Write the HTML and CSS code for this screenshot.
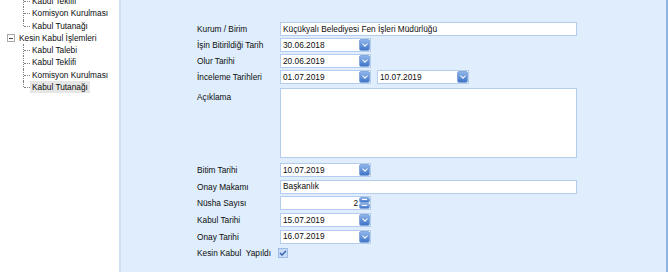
FILE: index.html
```html
<!DOCTYPE html>
<html lang="tr">
<head>
    <meta charset="UTF-8">
    <title>Kesin Kabul</title>
    <link rel="stylesheet" href="styles.css">
</head>
<body>
    <div class="window">
        <div class="tree">
            <ul class="group first">
                <li>Kabul Teklifi</li>
                <li>Komisyon Kurulması</li>
                <li>Kabul Tutanağı</li>
            </ul>
            <div class="node"><span class="toggle"></span>Kesin Kabul İşlemleri</div>
            <ul class="group">
                <li>Kabul Talebi</li>
                <li>Kabul Teklifi</li>
                <li>Komisyon Kurulması</li>
                <li><span class="selected">Kabul Tutanağı</span></li>
            </ul>
        </div>

        <div class="main">
            <div class="form">
                <div class="row">
                    <label>Kurum / Birim</label>
                    <div class="field wide">Küçükyalı Belediyesi Fen İşleri Müdürlüğü</div>
                </div>
                <div class="row">
                    <label>İşin Bitirildiği Tarih</label>
                    <div class="field date">30.06.2018<span class="drop"></span></div>
                </div>
                <div class="row">
                    <label>Olur Tarihi</label>
                    <div class="field date">20.06.2019<span class="drop"></span></div>
                </div>
                <div class="row">
                    <label>İnceleme Tarihleri</label>
                    <div class="field date">01.07.2019<span class="drop"></span></div>
                    <div class="field date second">10.07.2019<span class="drop"></span></div>
                </div>
                <div class="row memo-row">
                    <label>Açıklama</label>
                    <div class="field memo"></div>
                </div>

                <div class="lower">
                    <div class="row">
                        <label>Bitim Tarihi</label>
                        <div class="field date">10.07.2019<span class="drop"></span></div>
                    </div>
                    <div class="row">
                        <label>Onay Makamı</label>
                        <div class="field wide">Başkanlık</div>
                    </div>
                    <div class="row">
                        <label>Nüsha Sayısı</label>
                        <div class="field date number">2<span class="spin"><span class="up"></span><span class="down"></span></span></div>
                    </div>
                    <div class="row">
                        <label>Kabul Tarihi</label>
                        <div class="field date">15.07.2019<span class="drop"></span></div>
                    </div>
                    <div class="row">
                        <label>Onay Tarihi</label>
                        <div class="field date">16.07.2019<span class="drop"></span></div>
                    </div>
                    <div class="row">
                        <label>Kesin Kabul&nbsp; Yapıldı</label>
                        <span class="check">
                            <svg width="8" height="6" viewBox="0 0 8 6"><path d="M1 3 L3 5 L7 1" fill="none" stroke="#2f5fb0" stroke-width="1.4"/></svg>
                        </span>
                    </div>
                </div>
            </div>
        </div>
    </div>
</body>
</html>
```

FILE: styles.css
```css
body {
    margin: 0;
    font-family: "Liberation Sans", Arial, sans-serif;
    font-size: 8.3px;
    color: #0d0d0d;
    overflow: hidden;
}
.window {
    display: flex;
    height: 272px;
    width: 669px;
}
.tree {
    width: 121px;
    background: #fff;
    border-right: 2px solid #cfdff4;
    box-sizing: border-box;
    flex: none;
    overflow: hidden;
}
.group {
    list-style: none;
    margin: 0;
    padding: 0;
}
.group.first {
    margin-top: -5px;
}
.group li {
    position: relative;
    height: 12.3px;
    line-height: 12.3px;
    padding-left: 32px;
}
.group li::before {
    content: "";
    position: absolute;
    left: 23px;
    top: 0;
    height: 100%;
    border-left: 1px dotted #808080;
}
.group li:last-child::before {
    height: 50%;
}
.group li::after {
    content: "";
    position: absolute;
    left: 24px;
    top: 50%;
    width: 6px;
    border-top: 1px dotted #808080;
}
.node {
    height: 12.3px;
    line-height: 12.3px;
    display: flex;
    align-items: center;
    padding-left: 7px;
}
.toggle {
    width: 8px;
    height: 8px;
    border: 1px solid #a8a8a8;
    margin-right: 4px;
    position: relative;
    box-sizing: border-box;
}
.toggle::after {
    content: "";
    position: absolute;
    left: 1px;
    right: 1px;
    top: 2.5px;
    border-top: 1px solid #444;
}
.selected {
    background: #e6e6e6;
    padding: 1px 2px;
    margin-left: -2px;
}

.main {
    flex: 1;
    background: #dfedfc;
    border-right: 2px solid #8fb2e2;
    margin-right: 1px;
}
.form {
    padding: 21px 0 0 76px;
}
.row {
    display: flex;
    align-items: center;
    height: 16px;
}
.row label {
    width: 83px;
    flex: none;
}
.field {
    height: 14px;
    line-height: 13px;
    box-sizing: border-box;
    background: #fff;
    border: 1px solid #b5cdec;
    padding-left: 2px;
    display: flex;
    align-items: center;
    white-space: nowrap;
}
.wide {
    width: 297px;
}
.date {
    width: 91px;
    justify-content: space-between;
}
.date.second {
    margin-left: 6px;
    width: 92px;
}
.drop {
    width: 11px;
    height: 12px;
    box-sizing: border-box;
    border: 1px solid #86a9dc;
    border-radius: 2px;
    background: linear-gradient(#8db4ea, #3f74c8);
    position: relative;
}
.drop::after {
    content: "";
    position: absolute;
    left: 3px;
    top: 2px;
    width: 3px;
    height: 3px;
    border-right: 1.4px solid #fff;
    border-bottom: 1.4px solid #fff;
    transform: rotate(45deg);
}
.number {
    justify-content: flex-end;
}
.spin {
    display: flex;
    flex-direction: column;
    margin-left: 1px;
    width: 11px;
    height: 12px;
}
.spin span {
    flex: 1;
    background: linear-gradient(#8db4ea, #3f74c8);
    border: 1px solid #86a9dc;
    border-radius: 2px;
    position: relative;
}
.spin .up::after,
.spin .down::after {
    content: "";
    position: absolute;
    left: 2px;
    right: 2px;
    top: 1px;
    border-top: 1px solid #fff;
}
.memo-row {
    height: auto;
    align-items: flex-start;
    margin-top: 3px;
}
.memo-row label {
    padding-top: 4px;
}
.memo {
    width: 297px;
    height: 70px;
}
.lower {
    margin-top: 4px;
}
.lower .row {
    height: 16.6px;
}
.check {
    width: 10px;
    height: 10px;
    box-sizing: border-box;
    border: 1px solid #9dbbe6;
    background: #c9dcf5;
    margin-left: -2px;
    display: flex;
    align-items: center;
    justify-content: center;
}
```
